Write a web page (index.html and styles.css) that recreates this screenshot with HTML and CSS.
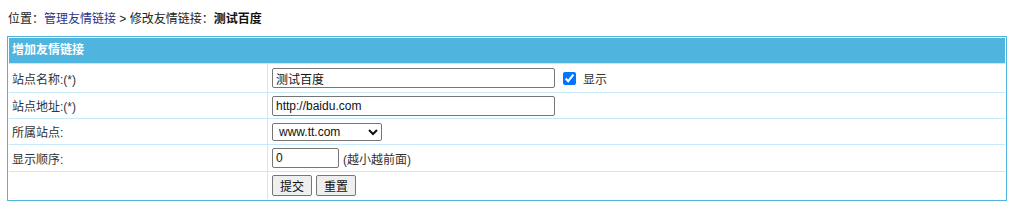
FILE: index.html
```html
<!DOCTYPE html>
<html lang="zh-CN">
<head>
<meta charset="utf-8">
<title>修改友情链接</title>
<link rel="stylesheet" href="styles.css">
</head>
<body>
<div class="crumb">位置：<a class="crumb-link" href="#">管理友情链接</a> &gt; 修改友情链接：<b>测试百度</b></div>
<form class="panel">
  <div class="panel-hd">增加友情链接</div>
  <div class="row row-1">
    <div class="label">站点名称:(*)</div>
    <div class="value">
      <input class="txt txt-long" type="text" value="测试百度">
      <label class="chk"><input type="checkbox" checked><span>显示</span></label>
    </div>
  </div>
  <div class="row row-2">
    <div class="label">站点地址:(*)</div>
    <div class="value"><input class="txt txt-long" type="text" value="http://baidu.com"></div>
  </div>
  <div class="row row-3">
    <div class="label">所属站点:</div>
    <div class="value">
      <select class="sel"><option>www.tt.com</option></select>
    </div>
  </div>
  <div class="row row-4">
    <div class="label">显示顺序:</div>
    <div class="value"><input class="txt txt-short" type="text" value="0"><span class="hint">(越小越前面)</span></div>
  </div>
  <div class="row row-5">
    <div class="label"></div>
    <div class="value"><button class="btn" type="button">提交</button><button class="btn" type="reset">重置</button></div>
  </div>
</form>
</body>
</html>
```

FILE: styles.css
```css
html, body {
  margin: 0;
  padding: 0;
  background: #fff;
}
body {
  font-family: "Liberation Sans", "Noto Sans CJK SC", sans-serif;
  font-size: 12px;
  color: #222;
}
.crumb {
  padding: 10px 0 0 8px;
  height: 18px;
  line-height: 18px;
  margin-bottom: 8px;
  color: #222;
}
.crumb-link {
  color: #28348a;
  text-decoration: none;
}
.crumb b {
  font-weight: bold;
  color: #111;
}
.panel {
  box-sizing: border-box;
  width: 1000px;
  margin: 0 0 0 7px;
  border: 1px solid #4fb4de;
  padding: 1px;
  background: #fff;
}
.panel-hd {
  height: 25px;
  line-height: 25px;
  background: #4fb4de;
  color: #fff;
  font-weight: bold;
  padding-left: 3px;
}
.row {
  box-sizing: border-box;
  display: grid;
  grid-template-columns: 258px 1fr;
  border-top: 1px solid #c6eafb;
}
.row-1 { height: 29px; }
.row-2 { height: 26px; }
.row-3 { height: 26px; }
.row-4 { height: 27px; }
.row-5 { height: 28px; }
.label {
  display: flex;
  align-items: center;
  padding-left: 3px;
  color: #333;
}
.value {
  display: flex;
  align-items: center;
  border-left: 1px solid #c6eafb;
  padding-left: 4px;
  gap: 4px;
}
.txt {
  box-sizing: border-box;
  height: 20px;
  margin: 0;
  padding: 1px 3px;
  border: 1px solid #767676;
  border-radius: 2px;
  font-family: "Liberation Sans", "Noto Sans CJK SC", sans-serif;
  font-size: 12px;
  color: #111;
  background: #fff;
}
.txt-long { width: 283px; }
.txt-short { width: 67px; }
.chk {
  display: flex;
  align-items: center;
  margin-left: 4px;
  color: #333;
}
.chk input {
  width: 13px;
  height: 13px;
  margin: 0 7px 0 0;
  accent-color: #0075ff;
}
.sel {
  box-sizing: border-box;
  width: 110px;
  height: 18px;
  margin: 0;
  padding: 0 2px;
  border: 1px solid #767676;
  border-radius: 2px;
  font-family: "Liberation Sans", "Noto Sans CJK SC", sans-serif;
  font-size: 12px;
  color: #111;
  background: #fff;
}
.hint {
  color: #333;
}
.btn {
  box-sizing: border-box;
  width: 40px;
  height: 21px;
  margin: 0;
  padding: 0;
  border: 1px solid #767676;
  border-radius: 2px;
  background: #efefef;
  font-family: "Liberation Sans", "Noto Sans CJK SC", sans-serif;
  font-size: 12px;
  color: #111;
}
```
